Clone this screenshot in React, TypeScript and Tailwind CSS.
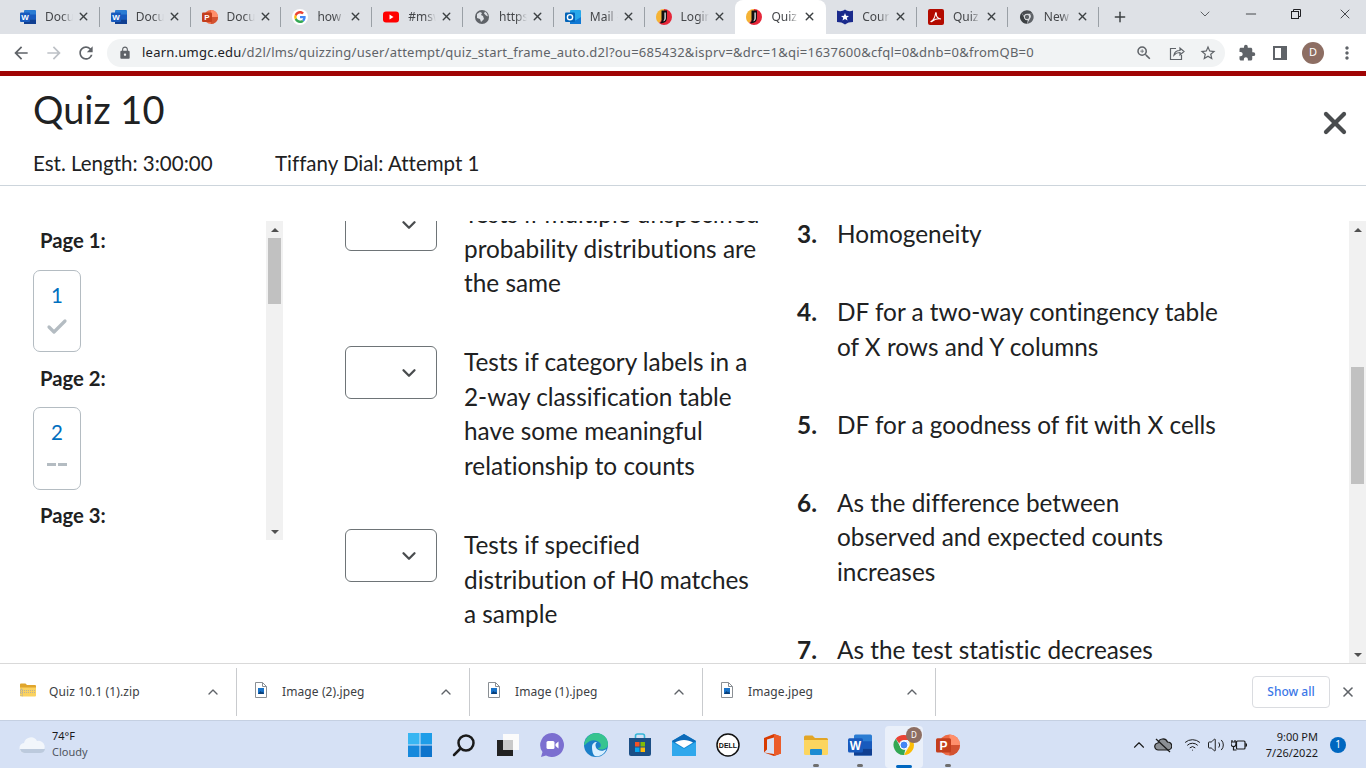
import { Check, ChevronDown, ChevronUp, Minus, Plus, X, Wifi, Volume2 } from "lucide-react";
import { MdArrowBack, MdArrowForward, MdRefresh, MdLock, MdExtension, MdStarBorder, MdMoreVert, MdZoomIn } from "react-icons/md";

const WordIcon = ({ size = 16 }: { size?: number }) => (
  <svg width={size} height={size} viewBox="0 0 16 16">
    <rect x="4" y="1" width="12" height="14" rx="1" fill="#2b7cd3" />
    <rect x="4" y="5.500" width="12" height="5" fill="#185abd" />
    <rect x="4" y="10.500" width="12" height="4.500" fill="#103f91" />
    <rect x="0" y="3.500" width="10" height="9.500" rx="1" fill="#185abd" />
    <text x="5" y="11" textAnchor="middle" fontSize="8" fontWeight="700" fill="#fff" fontFamily="Liberation Sans">W</text>
  </svg>
);

const PptIcon = ({ size = 16 }: { size?: number }) => (
  <svg width={size} height={size} viewBox="0 0 16 16">
    <circle cx="9" cy="8" r="7" fill="#ed6c47" />
    <path d="M9 8V1a7 7 0 0 1 7 7z" fill="#ff8f6b" />
    <path d="M9 8h7a7 7 0 0 1-7 7z" fill="#d35230" />
    <rect x="0" y="3.500" width="10" height="9.500" rx="1" fill="#c43e1c" />
    <text x="5" y="11" textAnchor="middle" fontSize="8" fontWeight="700" fill="#fff" fontFamily="Liberation Sans">P</text>
  </svg>
);

const GoogleIcon = () => (
  <svg width="16" height="16" viewBox="0 0 48 48">
    <circle cx="24" cy="24" r="24" fill="#fff" />
    <path d="M41 24.500c0-1.300-.1-2.300-.3-3.400H24v6.500h9.600c-.4 2.200-1.700 4-3.600 5.200l5.600 4.400c3.400-3.100 5.400-7.600 5.400-12.700z" fill="#4285f4" />
    <path d="M24 42c4.700 0 8.600-1.500 11.600-4.800L30 32.800c-1.500 1-3.500 1.700-6 1.700-4.600 0-8.500-3.100-9.900-7.300l-5.800 4.500C11.300 37.800 17.200 42 24 42z" fill="#34a853" />
    <path d="M14.100 27.200a10.600 10.600 0 0 1 0-6.400l-5.800-4.500a18 18 0 0 0 0 15.400z" fill="#fbbc05" />
    <path d="M24 13.500c2.600 0 4.900.9 6.700 2.600l5-5C32.600 8 28.700 6 24 6 17.200 6 11.300 10.200 8.300 16.300l5.800 4.500c1.400-4.200 5.300-7.300 9.900-7.300z" fill="#ea4335" />
  </svg>
);

const YoutubeIcon = () => (
  <svg width="16" height="16" viewBox="0 0 16 16">
    <rect y="2.500" width="16" height="11" rx="3" fill="#f00" />
    <path d="M6.500 5.500v5L10.500 8z" fill="#fff" />
  </svg>
);

const GlobeIcon = () => (
  <svg width="16" height="16" viewBox="0 0 16 16">
    <circle cx="8" cy="8" r="7" fill="#5f6368" />
    <path d="M3 5l3-2 2 1-1 2 2 1 1 3-3 3-1-3-3-1zM11 2.500l2 2 1 3-2-1-2-2z" fill="#dee1e6" />
  </svg>
);

const OutlookIcon = () => (
  <svg width="16" height="16" viewBox="0 0 16 16">
    <rect x="5" y="1" width="11" height="14" rx="1" fill="#28a8ea" />
    <path d="M5 8l5.500 3.500L16 8v7H5z" fill="#0f78d4" />
    <rect x="0" y="3.500" width="10" height="9.500" rx="1" fill="#0364b8" />
    <circle cx="5" cy="8.200" r="2.600" fill="none" stroke="#fff" strokeWidth="1.400" />
  </svg>
);

const UmgcIcon = () => (
  <svg width="16" height="16" viewBox="0 0 16 16">
    <path d="M8 0a8 8 0 0 0-8 8c0 2.500 1 4.500 3 6L8 8z" fill="#f5b335" />
    <path d="M8 0a8 8 0 0 1 0 16c-2 0-3.500-.8-5-2l5-6z" fill="#e6273a" />
    <path d="M5.500 1.500h5.500v7.500c0 3.500-3 6-7 5 2-1 1.500-3 1.500-5z" fill="#111" />
    <path d="M8.500 3.500h1.200v6c0 1.500-1 2.500-2.500 2.800.8-.8 1.300-1.800 1.300-3z" fill="#fff" />
  </svg>
);

const ShieldIcon = () => (
  <svg width="16" height="16" viewBox="0 0 16 16">
    <path d="M0 1.500c2.500 1 5.500 1 8-1 2.500 2 5.500 2 8 1V13c-3 0-6 .8-8 2.500C6 13.800 3 13 0 13z" fill="#1a2a8c" />
    <path d="M8 4l1.100 2.700 2.900.2-2.200 1.900.7 2.800L8 10.100l-2.500 1.500.7-2.800L4 6.900l2.900-.2z" fill="#fff" />
  </svg>
);

const PdfIcon = () => (
  <svg width="16" height="16" viewBox="0 0 16 16">
    <rect width="16" height="16" rx="2" fill="#b30b00" />
    <path d="M3 12.500c2-1 4-4.500 4.500-8 .2-1.500 1-1 .8.500C8 7.500 10 10 13 10c-3-.5-6.500.5-8.500 2-1 .8-2 .8-1.500.5z" fill="none" stroke="#fff" strokeWidth="1.100" />
  </svg>
);

const ChromeIcon = ({ size = 16, gray = false }: { size?: number; gray?: boolean }) => (
  <svg width={size} height={size} viewBox="0 0 48 48">
    <path d="M24 4a20 20 0 0 1 17.300 10H24a10 10 0 0 0-9.500 7L7.500 11.500A20 20 0 0 1 24 4z" fill={gray ? "#4a4d51" : "#ea4335"} />
    <path d="M41.300 14A20 20 0 0 1 24 44l8.700-15a10 10 0 0 0-1-15z" fill={gray ? "#5f6368" : "#fbbc05"} />
    <path d="M24 44A20 20 0 0 1 7.500 11.500l8 14a10 10 0 0 0 11 8z" fill={gray ? "#3c4043" : "#34a853"} />
    <circle cx="24" cy="24" r="8" fill={gray ? "#5f6368" : "#4285f4"} stroke="#fff" strokeWidth="2" />
  </svg>
);

const TABS = [
  { title: "Document", icon: <WordIcon />, sep: true },
  { title: "Document", icon: <WordIcon />, sep: true },
  { title: "Document", icon: <PptIcon />, sep: true },
  { title: "how to", icon: <GoogleIcon />, sep: true },
  { title: "#msw", icon: <YoutubeIcon />, sep: true },
  { title: "https://", icon: <GlobeIcon />, sep: true },
  { title: "Mail -", icon: <OutlookIcon />, sep: true },
  { title: "Login -", icon: <UmgcIcon />, sep: false },
  { title: "Quiz -", icon: <UmgcIcon />, sep: false, active: true },
  { title: "Course", icon: <ShieldIcon />, sep: true },
  { title: "Quiz 10", icon: <PdfIcon />, sep: true },
  { title: "New Tab", icon: <ChromeIcon gray />, sep: true },
];

function TabStrip() {
  return (
    <div className="h-[34px] bg-[#dee1e6] flex items-start pl-[9px] shrink-0">
      {TABS.map((t, i) => (
        <div key={i} className={`relative h-[34px] w-[90.8px] flex items-center pl-[11px] pb-[1px] rounded-t-lg ${t.active ? "bg-white" : ""}`}>
          <span className="w-4 h-4 shrink-0 flex items-center justify-center">{t.icon}</span>
          <span className="ml-[9px] w-[28px] overflow-hidden whitespace-nowrap text-[12px] text-[#45474a] [mask-image:linear-gradient(90deg,#000_60%,transparent)]">{t.title}</span>
          <X className="ml-[4px] text-[#3c4043]" size={13} strokeWidth={2.600} />
          {t.sep && <span className="absolute right-0 top-[7px] h-[20px] w-px bg-[#9aa0a6]" />}
        </div>
      ))}
      <Plus className="ml-[13px] mt-[9px] text-[#3c4043]" size={16} strokeWidth={2.200} />
      <ChevronDown className="ml-[69px] mt-[6px] text-[#3c4043]" size={16} strokeWidth={1.200} />
      <Minus className="ml-[30px] mt-[6px] text-[#202124]" size={16} strokeWidth={1.200} />
      <svg className="ml-[32px] mt-[9px]" width="10" height="10" viewBox="0 0 10 10" fill="none" stroke="#202124">
        <rect x=".5" y="2.500" width="7" height="7" />
        <path d="M2.500 2.500V.5h7v7h-2" />
      </svg>
      <X className="ml-[36px] mt-[6px] text-[#202124]" size={16} strokeWidth={1.200} />
    </div>
  );
}

function Toolbar() {
  return (
    <div className="h-[37px] bg-white flex items-center pl-[11px] shrink-0">
      <MdArrowBack className="text-[#5f6368]" size={20} />
      <MdArrowForward className="ml-[13px] text-[#bdc1c6]" size={20} />
      <MdRefresh className="ml-[12px] text-[#5f6368]" size={20} />
      <div className="ml-[11px] w-[1118px] h-[28px] rounded-full bg-[#f1f3f4] flex items-center pl-[11px] pr-[8px]">
        <MdLock className="text-[#5f6368]" size={14} />
        <span className="ml-[10px] w-[900px] whitespace-nowrap text-[13px] tracking-[0.24px] text-[#5f6368]">
          <span className="text-[#202124]">learn.umgc.edu</span>/d2l/lms/quizzing/user/attempt/quiz_start_frame_auto.d2l?ou=685432&amp;isprv=&amp;drc=1&amp;qi=1637600&amp;cfql=0&amp;dnb=0&amp;fromQB=0
        </span>
        <MdZoomIn className="ml-auto -translate-x-[2px] text-[#5f6368]" size={18} />
        <svg className="ml-[14px]" width="16" height="16" viewBox="0 0 16 16" fill="none" stroke="#5f6368" strokeWidth="1.200">
          <path d="M7 3.500H1.500v11h11V10" />
          <path d="M5 10c.5-3 3-4.500 6-4.500V3l4 3.500-4 3.500V7.500c-2.500 0-4.500.8-6 2.500z" />
        </svg>
        <MdStarBorder className="ml-[14px] text-[#5f6368]" size={18} />
      </div>
      <MdExtension className="ml-[13px] text-[#5f6368]" size={18} />
      <svg className="ml-[17px]" width="14" height="14" viewBox="0 0 14 14">
        <rect x="1" y="1" width="12" height="12" fill="none" stroke="#5f6368" strokeWidth="2" />
        <rect x="8" y="1" width="5" height="12" fill="#5f6368" />
      </svg>
      <span className="ml-[15px] w-[22px] h-[22px] rounded-full bg-[#8d6e63] text-white text-[11px] flex items-center justify-center">D</span>
      <MdMoreVert className="ml-[13px] text-[#5f6368]" size={20} />
    </div>
  );
}

function Scrollbar({ className, thumb }: { className: string; thumb: string }) {
  return (
    <div className={`w-[17px] shrink-0 bg-[#f1f1f1] flex flex-col items-center ${className}`}>
      <div className="h-[17px] flex items-center justify-center shrink-0">
        <span className="w-0 h-0 border-x-[4px] border-x-transparent border-b-[4px] border-b-[#505050]" />
      </div>
      <div className="flex-1 w-full px-[2px]">
        <div className={`bg-[#c1c1c1] ${thumb}`} />
      </div>
      <div className="h-[17px] flex items-center justify-center shrink-0">
        <span className="w-0 h-0 border-x-[4px] border-x-transparent border-t-[4px] border-t-[#505050]" />
      </div>
    </div>
  );
}

function PageBox({ n, done }: { n: number; done: boolean }) {
  return (
    <div className={`w-[48px] rounded-[7px] border border-[#b4bcc2] flex flex-col items-center pt-[11px] ${done ? "h-[82px]" : "h-[83px]"}`}>
      <span className="text-[20.500px] leading-[26px] text-[#006fbf]">{n}</span>
      {done ? (
        <Check className="mt-[7px] text-[#b4bcc2]" size={24} strokeWidth={3.200} />
      ) : (
        <div className="mt-[18px] flex gap-[2px]">
          <span className="w-[9px] h-[3px] bg-[#b4bcc2]" />
          <span className="w-[9px] h-[3px] bg-[#b4bcc2]" />
        </div>
      )}
    </div>
  );
}

const PageLabel = ({ children }: { children: string }) => (
  <p className="pl-[7px] text-[20.300px] leading-[28px] font-bold text-[#202122]">{children}</p>
);

function Match({ lines }: { lines: string[] }) {
  return (
    <div className="flex gap-[27px]">
      <div className="w-[92px] h-[53px] mt-[2px] rounded-[6px] border border-[#6e7477] flex items-center justify-end pr-[16px] shrink-0">
        <ChevronDown className="text-[#494c4e]" size={22} strokeWidth={2.500} />
      </div>
      <p className="w-[310px] pt-[1px] text-[24.350px] leading-[34.600px] text-[#202122] whitespace-nowrap">
        {lines.map((l) => (
          <span key={l} className="block">{l}</span>
        ))}
      </p>
    </div>
  );
}

function Answer({ n, lines }: { n: number; lines: string[] }) {
  return (
    <div className="flex text-[24.350px] leading-[34.600px] text-[#202122]">
      <span className="w-[40px] font-bold shrink-0">{n}.</span>
      <p className="whitespace-nowrap">
        {lines.map((l) => (
          <span key={l} className="block">{l}</span>
        ))}
      </p>
    </div>
  );
}

function Quiz() {
  return (
    <div className="flex-1 min-h-0 bg-white font-['Lato',sans-serif] [font-variant-ligatures:none] flex flex-col">
      <div className="h-[110px] shrink-0 border-b border-[#cdd5dc] flex flex-col pl-[33px] pr-[13px]">
        <div className="h-[52px] flex items-start justify-between pt-[10px]">
          <h1 className="text-[38px] leading-[46px] text-[#202122]">Quiz 10</h1>
          <X className="mt-[19px] text-[#494c4e]" size={36} strokeWidth={2.800} />
        </div>
        <div className="mt-[20px] flex text-[20.500px] leading-[30px] text-[#202122]">
          <span className="w-[242px]">Est. Length: 3:00:00</span>
          <span>Tiffany Dial: Attempt 1</span>
        </div>
      </div>
      <div className="mt-[35px] flex-1 min-h-0 flex overflow-hidden">
        <div className="w-[233px] ml-[33px] shrink-0 h-[319px] overflow-hidden pt-[5px] flex flex-col">
          <PageLabel>Page 1:</PageLabel>
          <div className="mt-[16px]"><PageBox n={1} done /></div>
          <div className="mt-[12px]"><PageLabel>Page 2:</PageLabel></div>
          <div className="mt-[15px]"><PageBox n={2} done={false} /></div>
          <div className="mt-[11px]"><PageLabel>Page 3:</PageLabel></div>
        </div>
        <Scrollbar className="h-[319px]" thumb="h-[66px]" />
        <div className="flex-1 overflow-hidden flex pl-[62px]">
          <div className="w-[452px] shrink-0 -mt-[25px] flex flex-col gap-[43.500px]">
            <Match lines={["Tests if multiple unspecified", "probability distributions are", "the same"]} />
            <Match lines={["Tests if category labels in a", "2-way classification table", "have some meaningful", "relationship to counts"]} />
            <Match lines={["Tests if specified", "distribution of H0 matches", "a sample"]} />
          </div>
          <div className="-mt-[4px] flex flex-col gap-[43.500px]">
            <Answer n={3} lines={["Homogeneity"]} />
            <Answer n={4} lines={["DF for a two-way contingency table", "of X rows and Y columns"]} />
            <Answer n={5} lines={["DF for a goodness of fit with X cells"]} />
            <Answer n={6} lines={["As the difference between", "observed and expected counts", "increases"]} />
            <Answer n={7} lines={["As the test statistic decreases"]} />
          </div>
        </div>
        <Scrollbar className="h-full" thumb="mt-[129px] h-[117px]" />
      </div>
    </div>
  );
}

const ZipIcon = () => (
  <svg width="16" height="14" viewBox="0 0 16 14">
    <path d="M0 1.500A1 1 0 0 1 1 .5h4.500l1.500 1.500h8a1 1 0 0 1 1 1V5H0z" fill="#e0a52c" />
    <path d="M0 4.500h16v8a1 1 0 0 1-1 1H1a1 1 0 0 1-1-1z" fill="#fbd25f" />
    <path d="M1 6h1.500v7H1zM0 7.500h16M0 9.500h16" stroke="#a8a8a8" strokeWidth=".8" fill="none" strokeDasharray="1 1" />
  </svg>
);

const ImageFile = () => (
  <svg width="12" height="16" viewBox="0 0 12 16">
    <path d="M.5.5h7l4 4v11H.5z" fill="#fff" stroke="#8a8f94" />
    <path d="M7.500.5v4h4" fill="none" stroke="#8a8f94" />
    <rect x="3" y="6" width="6" height="6" fill="#1a73c8" />
    <path d="M3 12l2.500-3 1.500 1.500L8 9.500l1 2.500z" fill="#0b3f78" />
  </svg>
);

function ShelfItem({ name, zip, width }: { name: string; zip?: boolean; width: string }) {
  return (
    <div className={`${width} h-[48px] border-r border-[#c9cbce] flex items-center shrink-0 pb-[1px]`}>
      <span className={`${zip ? "ml-[20px] w-[16px]" : "ml-[18px] w-[12px]"} shrink-0 flex -mt-[3px]`}>
        {zip ? <ZipIcon /> : <ImageFile />}
      </span>
      <span className={`${zip ? "ml-[13px]" : "ml-[15px]"} text-[12px] tracking-[0.1px] text-[#3c4043] whitespace-nowrap`}>{name}</span>
      <ChevronUp className="ml-auto mr-[15px] text-[#5f6368]" size={16} strokeWidth={2} />
    </div>
  );
}

function Shelf() {
  return (
    <div className="h-[57px] shrink-0 bg-white border-t border-[#d9d9d9] flex items-center font-['Noto_Sans',sans-serif]">
      <ShelfItem name="Quiz 10.1 (1).zip" zip width="w-[237px]" />
      <ShelfItem name="Image (2).jpeg" width="w-[233px]" />
      <ShelfItem name="Image (1).jpeg" width="w-[233px]" />
      <ShelfItem name="Image.jpeg" width="w-[233px]" />
      <button className="ml-auto w-[78px] h-[32px] rounded-[4px] border border-[#dadce0] text-[12px] font-medium text-[#3b78e7]">Show all</button>
      <X className="ml-[10px] mr-[10px] text-[#5f6368]" size={16} strokeWidth={2.400} />
    </div>
  );
}

const Dot = () => <span className="w-[6px] h-[3px] rounded-full bg-[#6e6e6e]" />;

const TASK_ICONS = [
  {
    icon: (
      <svg width="24" height="24" viewBox="0 0 24 24">
        <path d="M0 0h11.500v11.500H0z" fill="#38b6f2" />
        <path d="M12.500 0H24v11.500H12.500z" fill="#1e9de8" />
        <path d="M0 12.500h11.500V24H0z" fill="#1689dc" />
        <path d="M12.500 12.500H24V24H12.500z" fill="#0d74cc" />
      </svg>
    ),
  },
  {
    icon: (
      <svg width="24" height="24" viewBox="0 0 24 24" fill="none" stroke="#1a1a1a" strokeWidth="2.500">
        <circle cx="14" cy="10" r="7.500" />
        <path d="M8.500 15.500L2 22" strokeLinecap="round" />
      </svg>
    ),
  },
  {
    icon: (
      <svg width="24" height="24" viewBox="0 0 24 24">
        <rect x="7" y="1" width="16" height="16" fill="#fbfbfb" />
        <rect x="1" y="7" width="16" height="16" fill="#222" />
        <rect x="7" y="7" width="10" height="10" fill="#c9c9c9" />
      </svg>
    ),
  },
  {
    icon: (
      <svg width="24" height="24" viewBox="0 0 24 24">
        <path d="M12 0a12 12 0 1 1-6 22.400L1 24l1.500-5A12 12 0 0 1 12 0z" fill="#7b6fd0" />
        <rect x="6.500" y="8" width="8" height="8" rx="1.500" fill="#fff" />
        <path d="M15.500 11l3-2.500v7l-3-2.500z" fill="#fff" />
      </svg>
    ),
  },
  {
    icon: (
      <svg width="24" height="24" viewBox="0 0 24 24">
        <circle cx="12" cy="12" r="12" fill="#1b7fc8" />
        <path d="M0 12C1 4 7 0 12 0c7 0 12 5 12 11 0 4-3.500 5.500-6.500 5.500-2 0-3.500-.5-3.500-1.500 3 0 3.500-3 2-5S10 6 6 8 1 13 0 12z" fill="#37c48f" />
        <path d="M8 14c0-3 2-5 5-5-1.500 1-2 3-1 5.500s6 5 10.500 1.500C20 22 15 24 11 23c-2-1-3-5-3-9z" fill="#d9efff" />
      </svg>
    ),
  },
  {
    icon: (
      <svg width="24" height="24" viewBox="0 0 24 24">
        <path d="M7.500 5V3a2 2 0 0 1 2-2h5a2 2 0 0 1 2 2v2" fill="none" stroke="#35b6d8" strokeWidth="1.600" />
        <path d="M1 5h22v16a2 2 0 0 1-2 2H3a2 2 0 0 1-2-2z" fill="#1c4f85" />
        <path d="M7 9h4.500v4.500H7z" fill="#f35325" />
        <path d="M12.500 9H17v4.500h-4.500z" fill="#81bc06" />
        <path d="M7 14.500h4.500V19H7z" fill="#05a6f0" />
        <path d="M12.500 14.500H17V19h-4.500z" fill="#ffba08" />
      </svg>
    ),
  },
  {
    icon: (
      <svg width="24" height="24" viewBox="0 0 24 24">
        <path d="M12 1L0 8v14a1 1 0 0 0 1 1h22a1 1 0 0 0 1-1V8z" fill="#1590d8" />
        <path d="M12 1L0 8l12 7 12-7z" fill="#0d6ab8" />
        <path d="M3 9.500c5-3.500 13-3.500 18 0L12 15z" fill="#ffffff" />
        <path d="M0 9l12 7 12-7v13a1 1 0 0 1-1 1H1a1 1 0 0 1-1-1z" fill="#30a8ec" />
      </svg>
    ),
  },
  {
    icon: (
      <svg width="24" height="24" viewBox="0 0 24 24">
        <circle cx="12" cy="12" r="11" fill="#fff" stroke="#111" strokeWidth="1.500" />
        <text x="12" y="14.500" textAnchor="middle" fontSize="7" fontWeight="700" fill="#111" fontFamily="Liberation Sans">DELL</text>
      </svg>
    ),
  },
  {
    icon: (
      <svg width="24" height="24" viewBox="0 0 24 24">
        <path d="M14 1l7 2.500v17L14 23 4 19.500l10 1.500V4.500L7 6.500v10l-3 3V5z" fill="#d83b01" />
        <path d="M14 1l7 2.500v17L14 23z" fill="#eb5c2a" />
      </svg>
    ),
  },
  {
    dot: true,
    icon: (
      <svg width="24" height="24" viewBox="0 0 24 24">
        <path d="M0 4a1.500 1.500 0 0 1 1.500-1.500h7L11 5h11.500A1.500 1.500 0 0 1 24 6.500V8H0z" fill="#e2a526" />
        <path d="M0 7h24v13.500a1.500 1.500 0 0 1-1.500 1.500h-21A1.500 1.500 0 0 1 0 20.500z" fill="#fcd55f" />
        <rect x="6" y="16" width="12" height="6" rx="1" fill="#1c8bd2" />
      </svg>
    ),
  },
  { dot: true, icon: <WordIcon size={24} /> },
  {
    active: true,
    icon: (
      <div className="relative w-[24px] h-[24px]">
        <ChromeIcon size={24} />
        <span className="absolute -top-[6px] -right-[6px] w-[16px] h-[16px] rounded-full bg-[#8d6e63] text-white text-[8px] flex items-center justify-center">D</span>
      </div>
    ),
  },
  { dot: true, icon: <PptIcon size={24} /> },
];

function Taskbar() {
  return (
    <div className="h-[48px] shrink-0 bg-[#d6e1f5] border-t border-[#c5d0e2] flex items-center font-['Noto_Sans',sans-serif] text-[#1a1a1a]">
      <svg className="ml-[19px] shrink-0" width="26" height="18" viewBox="0 0 26 18">
        <path d="M6 17a5 5 0 0 1-1-10 7 7 0 0 1 13-2 5.500 5.500 0 0 1 3 12z" fill="#f2f6fb" />
        <path d="M6 17a5 5 0 0 1-5-4h25a5 5 0 0 1-5 4z" fill="#bccadd" />
      </svg>
      <div className="ml-[7px] w-[347px] shrink-0 text-[11px] leading-[16px] -mt-[1px]">
        <p>74°F</p>
        <p className="text-[#4f5560]">Cloudy</p>
      </div>
      <div className="flex shrink-0 -ml-[1px]">
        {TASK_ICONS.map((t, i) => (
          <div key={i} className={`relative h-[42px] mt-[5px] pb-[5px] flex items-center justify-center rounded-[4px] ${t.active ? "bg-[#eaf0fa] mx-[3px] w-[38px]" : "w-[44px]"}`}>
            {t.icon}
            {t.dot && <span className="absolute bottom-[1px] flex"><Dot /></span>}
            {t.active && <span className="absolute bottom-[0px] w-[16px] h-[3px] rounded-full bg-[#0067c0]" />}
          </div>
        ))}
      </div>
      <div className="ml-auto flex items-center pr-[20px]">
        <ChevronUp className="text-[#1a1a1a]" size={18} strokeWidth={1.500} />
        <svg className="ml-[6px]" width="18" height="18" viewBox="0 0 18 18" fill="none" stroke="#1a1a1a" strokeWidth="1.200">
          <path d="M4.500 14a3.500 3.500 0 0 1-.5-7 5 5 0 0 1 9.500-1 4 4 0 0 1 .5 8z" fill="#8b8f94" />
          <path d="M2 3l14 13" />
        </svg>
        <Wifi className="ml-[12px]" size={17} strokeWidth={1.400} />
        <Volume2 className="ml-[6px]" size={18} strokeWidth={1.300} />
        <svg className="ml-[6px]" width="16" height="16" viewBox="0 0 16 16" fill="none" stroke="#1a1a1a" strokeWidth="1.200">
          <rect x="5.500" y="4" width="8.500" height="8" rx="1" />
          <path d="M14 7h1.500v2H14" />
          <path d="M1 3v2M4 3v2M0 5h5v2a2.500 2.500 0 0 1-5 0zM2.500 9.500V13h3" />
        </svg>
        <div className="ml-[9px] w-[62px] text-right text-[11px] leading-[16px]">
          <p>9:00 PM</p>
          <p>7/26/2022</p>
        </div>
        <span className="ml-[12px] w-[16px] h-[16px] rounded-full bg-[#0067c0] text-white text-[10px] flex items-center justify-center">1</span>
      </div>
    </div>
  );
}

export default function App() {
  return (
    <div className="w-[1366px] h-[768px] overflow-hidden flex flex-col bg-white font-['Noto_Sans',sans-serif]">
      <TabStrip />
      <Toolbar />
      <div className="h-[5px] bg-[#a00404] shrink-0" />
      <Quiz />
      <Shelf />
      <Taskbar />
    </div>
  );
}
